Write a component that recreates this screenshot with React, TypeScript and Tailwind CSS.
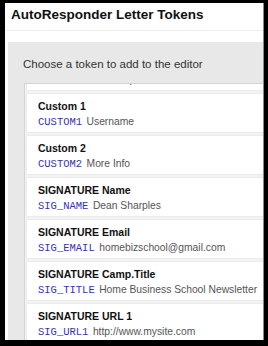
const tokens = [
  { title: 'Sender', code: 'SENDER', desc: 'Dean Sharples' },
  { title: 'Custom 1', code: 'CUSTOM1', desc: 'Username' },
  { title: 'Custom 2', code: 'CUSTOM2', desc: 'More Info' },
  { title: 'SIGNATURE Name', code: 'SIG_NAME', desc: 'Dean Sharples' },
  { title: 'SIGNATURE Email', code: 'SIG_EMAIL', desc: 'homebizschool@gmail.com' },
  { title: 'SIGNATURE Camp.Title', code: 'SIG_TITLE', desc: 'Home Business School Newsletter' },
  { title: 'SIGNATURE URL 1', code: 'SIG_URL1', desc: 'http://www.mysite.com' },
  { title: 'SIGNATURE URL 2', code: 'SIG_URL2', desc: 'http://www.mysite.com' },
];

export default function App() {
  return (
    <div className="w-[268px] h-[346px] bg-black pt-[3px] pl-[5px] pr-[4px] pb-[6px] font-['Liberation_Sans',Arial,sans-serif]">
      <div className="h-full bg-white overflow-hidden border-r border-[#8a8a8a]">
        {/* header */}
        <div className="h-[27px] pl-[6px] pt-[4px] font-bold text-[13.5px] leading-[16px] text-[#111] whitespace-nowrap">
          AutoResponder Letter Tokens
        </div>
        <div className="h-px bg-[#efefef]" />
        <div className="h-[11px]" />

        {/* token panel */}
        <div className="ml-[3px] w-[320px] h-[400px] bg-[#e8e8e8] pl-[15px] pt-[15px]">
          <div className="text-[11.5px] leading-[14px] text-[#333] whitespace-nowrap">
            Choose a token to add to the editor
          </div>
          <div className="mt-[12px] ml-px h-[300px] bg-[#f3f3f3] border border-[#d4d4d4] overflow-hidden pl-px">
            <div className="-mt-[33px]">
              {tokens.map((t) => (
                <div
                  key={t.code}
                  className="h-[40px] mb-[2px] bg-white border border-[#ebebeb] pl-[11px] pt-[5px] whitespace-nowrap"
                >
                  <div className="font-bold text-[10.5px] leading-[14px] text-[#111]">{t.title}</div>
                  <div className="leading-[14px]">
                    <span className="font-['Liberation_Mono','Courier_New',monospace] text-[10.5px] text-[#3535b0]">
                      {t.code}
                    </span>{' '}
                    <span className="text-[10.3px] text-[#555]">{t.desc}</span>
                  </div>
                </div>
              ))}
            </div>
          </div>
        </div>
      </div>
    </div>
  );
}
